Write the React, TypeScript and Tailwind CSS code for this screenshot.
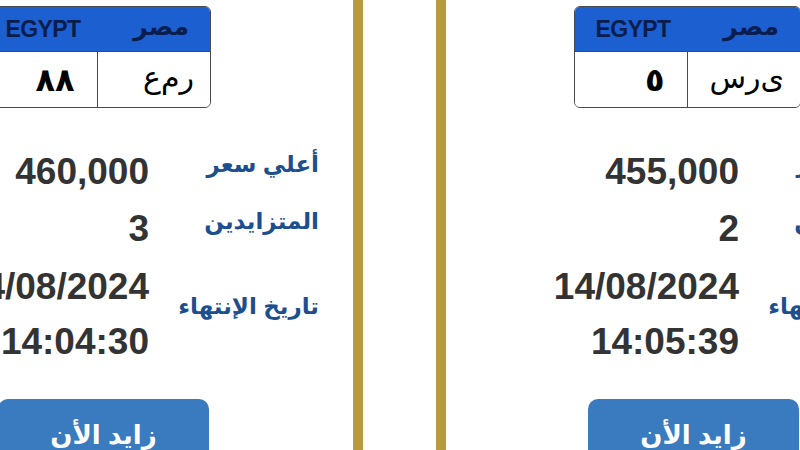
const auctions = [
  {
    letters: "ر\u200Cم\u200Cع",
    digits: "٨٨",
    price: "460,000",
    bidders: "3",
    date: "14/08/2024",
    time: "14:04:30",
  },
  {
    letters: "ى\u200Cر\u200Cس",
    digits: "٥",
    price: "455,000",
    bidders: "2",
    date: "14/08/2024",
    time: "14:05:39",
  },
];

type Auction = (typeof auctions)[number];

function Plate({ letters, digits }: { letters: string; digits: string }) {
  return (
    <div className="ml-[128px] mt-[6px] w-[227px] overflow-hidden rounded-[6px] border-[1.5px] border-[#4a4a4a]">
      <div className="flex h-[44px] items-center bg-[#1c5fd0] text-[#0b1d4d]">
        <div className="w-1/2 pr-[17px] text-right text-[23px] font-bold tracking-[-0.6px]">
          EGYPT
        </div>
        <div
          dir="rtl"
          className="w-1/2 pb-[4px] pr-[21px] text-right text-[25px] font-bold"
        >
          مصر
        </div>
      </div>
      <div className="flex h-[56px] border-t-[1.5px] border-[#4a4a4a] bg-white text-black">
        <div
          dir="rtl"
          className="flex w-1/2 items-center border-r-[1.5px] border-[#4a4a4a] pr-[22px] text-[32px] font-bold"
        >
          {digits}
        </div>
        <div
          dir="rtl"
          className="flex w-1/2 items-center pb-[4px] pr-[16px] text-[30px] tracking-[2px]"
        >
          {letters}
        </div>
      </div>
    </div>
  );
}

function Row({
  label,
  children,
  className,
}: {
  label: string;
  children: React.ReactNode;
  className?: string;
}) {
  return (
    <div className={`flex items-center ${className ?? ""}`}>
      <div className="w-[293px] text-right text-[37px] font-bold text-[#333333]">
        {children}
      </div>
      <div
        dir="rtl"
        className="mb-[16px] w-[170px] text-right text-[23px] font-bold leading-[30px] text-[#1d4f8f]"
      >
        {label}
      </div>
    </div>
  );
}

function Card({ item }: { item: Auction }) {
  return (
    <div className="h-[450px] w-[517px] shrink-0 border-x-[10px] border-[#b99b3f] bg-white">
      <Plate letters={item.letters} digits={item.digits} />
      <div className="mt-[35px] leading-[57px]">
        <Row label="أعلي سعر">{item.price}</Row>
        <Row label="المتزايدين">{item.bidders}</Row>
        <Row label="تاريخ الإنتهاء" className="mt-[2px] leading-[55px]">
          <div>{item.date}</div>
          <div>{item.time}</div>
        </Row>
      </div>
      <button className="ml-[142px] mt-[30px] h-[60px] w-[211px] rounded-[10px] bg-[#3a7bbf] pt-[12px] text-[26px] font-bold text-white">
        <span dir="rtl">زايد الأن</span>
      </button>
    </div>
  );
}

export default function App() {
  return (
    <div
      className="h-[450px] w-[800px] overflow-hidden bg-white"
      style={{ fontFamily: '"Liberation Sans", "DejaVu Sans", sans-serif' }}
    >
      <div className="-ml-[154px] flex gap-[73px]">
        {auctions.map((item) => (
          <Card key={item.time} item={item} />
        ))}
      </div>
    </div>
  );
}
